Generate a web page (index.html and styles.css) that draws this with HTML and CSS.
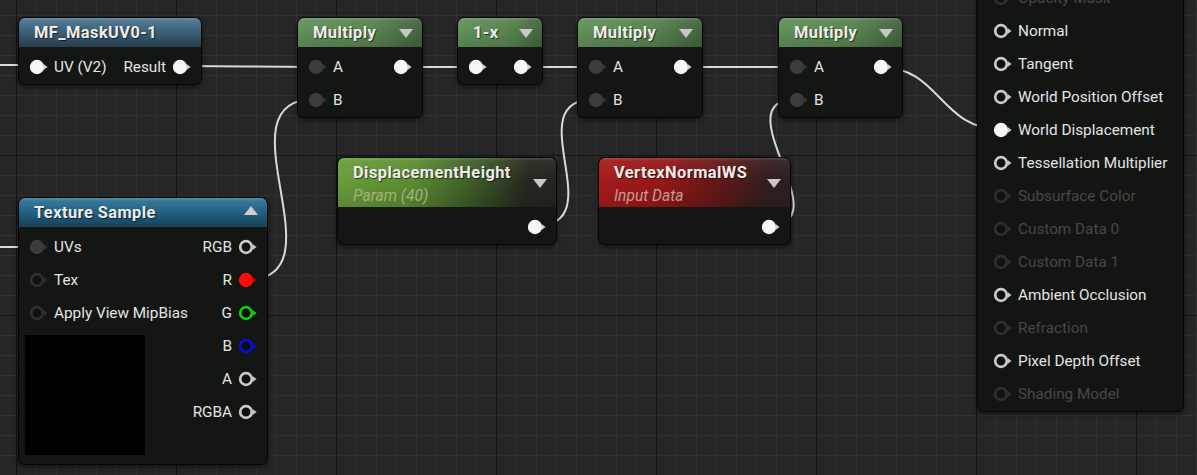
FILE: index.html
```html
<!DOCTYPE html>
<html>
<head>
<meta charset="utf-8">
<link rel="stylesheet" href="styles.css">
</head>
<body>
<div class="graph">
  <svg class="wires" width="1197" height="475" viewBox="0 0 1197 475">
    <path d="M-10 65 L36 65"/>
    <path d="M-10 247 L36 247"/>
    <path d="M181 66 C248 66 248 67 315 67"/>
    <path d="M400 67 L475 67"/>
    <path d="M522 67 L595 67"/>
    <path d="M680 67 L797 67"/>
    <path d="M880 67 C940 67 940 129 1000 129"/>
    <path d="M246 280 C346 280 215 99 315 99"/>
    <path d="M535 226 C615 226 515 99 595 99"/>
    <path d="M767 226 C845 226 719 99 797 99"/>
  </svg>

  <div class="node n-mf">
    <div class="head h-func"><span class="title">MF_MaskUV0-1</span></div>
    <div class="body">
      <div class="row both">
        <div class="pin-in"><svg class="pin p-white" viewBox="0 0 20 16"><circle cx="8" cy="8" r="5.8"/><path d="M14.6 5 L18.6 8 L14.6 11Z"/></svg><span>UV (V2)</span></div>
        <div class="pin-out"><span>Result</span><svg class="pin p-white" viewBox="0 0 20 16"><circle cx="8" cy="8" r="5.8"/><path d="M14.6 5 L18.6 8 L14.6 11Z"/></svg></div>
      </div>
    </div>
  </div>

  <div class="node n-mul1">
    <div class="head h-math"><span class="title">Multiply</span><span class="tri-down"></span></div>
    <div class="body">
      <div class="row both">
        <div class="pin-in"><svg class="pin p-dark" viewBox="0 0 20 16"><circle cx="8" cy="8" r="5.8"/><path d="M14.6 5 L18.6 8 L14.6 11Z"/></svg><span>A</span></div>
        <div class="pin-out"><svg class="pin p-white" viewBox="0 0 20 16"><circle cx="8" cy="8" r="5.8"/><path d="M14.6 5 L18.6 8 L14.6 11Z"/></svg></div>
      </div>
      <div class="row both">
        <div class="pin-in"><svg class="pin p-dark" viewBox="0 0 20 16"><circle cx="8" cy="8" r="5.8"/><path d="M14.6 5 L18.6 8 L14.6 11Z"/></svg><span>B</span></div>
      </div>
    </div>
  </div>

  <div class="node n-onex">
    <div class="head h-math"><span class="title">1-x</span><span class="tri-down"></span></div>
    <div class="body">
      <div class="row both">
        <div class="pin-in"><svg class="pin p-white" viewBox="0 0 20 16"><circle cx="8" cy="8" r="5.8"/><path d="M14.6 5 L18.6 8 L14.6 11Z"/></svg></div>
        <div class="pin-out"><svg class="pin p-white" viewBox="0 0 20 16"><circle cx="8" cy="8" r="5.8"/><path d="M14.6 5 L18.6 8 L14.6 11Z"/></svg></div>
      </div>
    </div>
  </div>

  <div class="node n-mul2">
    <div class="head h-math"><span class="title">Multiply</span><span class="tri-down"></span></div>
    <div class="body">
      <div class="row both">
        <div class="pin-in"><svg class="pin p-dark" viewBox="0 0 20 16"><circle cx="8" cy="8" r="5.8"/><path d="M14.6 5 L18.6 8 L14.6 11Z"/></svg><span>A</span></div>
        <div class="pin-out"><svg class="pin p-white" viewBox="0 0 20 16"><circle cx="8" cy="8" r="5.8"/><path d="M14.6 5 L18.6 8 L14.6 11Z"/></svg></div>
      </div>
      <div class="row both">
        <div class="pin-in"><svg class="pin p-dark" viewBox="0 0 20 16"><circle cx="8" cy="8" r="5.8"/><path d="M14.6 5 L18.6 8 L14.6 11Z"/></svg><span>B</span></div>
      </div>
    </div>
  </div>

  <div class="node n-mul3">
    <div class="head h-math"><span class="title">Multiply</span><span class="tri-down"></span></div>
    <div class="body">
      <div class="row both">
        <div class="pin-in"><svg class="pin p-dark" viewBox="0 0 20 16"><circle cx="8" cy="8" r="5.8"/><path d="M14.6 5 L18.6 8 L14.6 11Z"/></svg><span>A</span></div>
        <div class="pin-out"><svg class="pin p-white" viewBox="0 0 20 16"><circle cx="8" cy="8" r="5.8"/><path d="M14.6 5 L18.6 8 L14.6 11Z"/></svg></div>
      </div>
      <div class="row both">
        <div class="pin-in"><svg class="pin p-dark" viewBox="0 0 20 16"><circle cx="8" cy="8" r="5.8"/><path d="M14.6 5 L18.6 8 L14.6 11Z"/></svg><span>B</span></div>
      </div>
    </div>
  </div>

  <div class="node n-dh">
    <div class="head tall h-param">
      <div class="titles"><span class="title">DisplacementHeight</span><span class="sub sub-green">Param (40)</span></div>
      <span class="tri-down"></span>
    </div>
    <div class="body">
      <div class="row both end">
        <div class="pin-out"><svg class="pin p-white" viewBox="0 0 20 16"><circle cx="8" cy="8" r="5.8"/><path d="M14.6 5 L18.6 8 L14.6 11Z"/></svg></div>
      </div>
    </div>
  </div>

  <div class="node n-vn">
    <div class="head tall h-input">
      <div class="titles"><span class="title">VertexNormalWS</span><span class="sub sub-red">Input Data</span></div>
      <span class="tri-down"></span>
    </div>
    <div class="body">
      <div class="row both end">
        <div class="pin-out"><svg class="pin p-white" viewBox="0 0 20 16"><circle cx="8" cy="8" r="5.8"/><path d="M14.6 5 L18.6 8 L14.6 11Z"/></svg></div>
      </div>
    </div>
  </div>

  <div class="node n-tex">
    <div class="head h-tex"><span class="title">Texture Sample</span><span class="tri-up"></span></div>
    <div class="body tex-body">
      <div class="col">
        <div class="row"><div class="pin-in"><svg class="pin p-dark" viewBox="0 0 20 16"><circle cx="8" cy="8" r="5.8"/><path d="M14.6 5 L18.6 8 L14.6 11Z"/></svg><span>UVs</span></div></div>
        <div class="row"><div class="pin-in"><svg class="pin p-dim" viewBox="0 0 20 16"><circle cx="8" cy="8" r="5.8"/><path d="M14.6 5 L18.6 8 L14.6 11Z"/></svg><span>Tex</span></div></div>
        <div class="row"><div class="pin-in"><svg class="pin p-dim" viewBox="0 0 20 16"><circle cx="8" cy="8" r="5.8"/><path d="M14.6 5 L18.6 8 L14.6 11Z"/></svg><span>Apply View MipBias</span></div></div>
        <div class="preview"></div>
      </div>
      <div class="col">
        <div class="row end"><div class="pin-out"><span>RGB</span><svg class="pin p-ring" viewBox="0 0 20 16"><circle cx="8" cy="8" r="5.8"/><path d="M14.6 5 L18.6 8 L14.6 11Z"/></svg></div></div>
        <div class="row end"><div class="pin-out"><span>R</span><svg class="pin p-red" viewBox="0 0 20 16"><circle cx="8" cy="8" r="5.8"/><path d="M14.6 5 L18.6 8 L14.6 11Z"/></svg></div></div>
        <div class="row end"><div class="pin-out"><span>G</span><svg class="pin p-green" viewBox="0 0 20 16"><circle cx="8" cy="8" r="5.8"/><path d="M14.6 5 L18.6 8 L14.6 11Z"/></svg></div></div>
        <div class="row end"><div class="pin-out"><span>B</span><svg class="pin p-blue" viewBox="0 0 20 16"><circle cx="8" cy="8" r="5.8"/><path d="M14.6 5 L18.6 8 L14.6 11Z"/></svg></div></div>
        <div class="row end"><div class="pin-out"><span>A</span><svg class="pin p-ring" viewBox="0 0 20 16"><circle cx="8" cy="8" r="5.8"/><path d="M14.6 5 L18.6 8 L14.6 11Z"/></svg></div></div>
        <div class="row end"><div class="pin-out"><span>RGBA</span><svg class="pin p-ring" viewBox="0 0 20 16"><circle cx="8" cy="8" r="5.8"/><path d="M14.6 5 L18.6 8 L14.6 11Z"/></svg></div></div>
      </div>
    </div>
  </div>

  <div class="node n-result">
    <div class="body res-body">
      <div class="row dis"><div class="pin-in"><svg class="pin p-dim" viewBox="0 0 20 16"><circle cx="8" cy="8" r="5.8"/><path d="M14.6 5 L18.6 8 L14.6 11Z"/></svg><span>Opacity Mask</span></div></div>
      <div class="row"><div class="pin-in"><svg class="pin p-ring" viewBox="0 0 20 16"><circle cx="8" cy="8" r="5.8"/><path d="M14.6 5 L18.6 8 L14.6 11Z"/></svg><span>Normal</span></div></div>
      <div class="row"><div class="pin-in"><svg class="pin p-ring" viewBox="0 0 20 16"><circle cx="8" cy="8" r="5.8"/><path d="M14.6 5 L18.6 8 L14.6 11Z"/></svg><span>Tangent</span></div></div>
      <div class="row"><div class="pin-in"><svg class="pin p-ring" viewBox="0 0 20 16"><circle cx="8" cy="8" r="5.8"/><path d="M14.6 5 L18.6 8 L14.6 11Z"/></svg><span>World Position Offset</span></div></div>
      <div class="row"><div class="pin-in"><svg class="pin p-white" viewBox="0 0 20 16"><circle cx="8" cy="8" r="5.8"/><path d="M14.6 5 L18.6 8 L14.6 11Z"/></svg><span>World Displacement</span></div></div>
      <div class="row"><div class="pin-in"><svg class="pin p-ring" viewBox="0 0 20 16"><circle cx="8" cy="8" r="5.8"/><path d="M14.6 5 L18.6 8 L14.6 11Z"/></svg><span>Tessellation Multiplier</span></div></div>
      <div class="row dis"><div class="pin-in"><svg class="pin p-dim" viewBox="0 0 20 16"><circle cx="8" cy="8" r="5.8"/><path d="M14.6 5 L18.6 8 L14.6 11Z"/></svg><span>Subsurface Color</span></div></div>
      <div class="row dis"><div class="pin-in"><svg class="pin p-dim" viewBox="0 0 20 16"><circle cx="8" cy="8" r="5.8"/><path d="M14.6 5 L18.6 8 L14.6 11Z"/></svg><span>Custom Data 0</span></div></div>
      <div class="row dis"><div class="pin-in"><svg class="pin p-dim" viewBox="0 0 20 16"><circle cx="8" cy="8" r="5.8"/><path d="M14.6 5 L18.6 8 L14.6 11Z"/></svg><span>Custom Data 1</span></div></div>
      <div class="row"><div class="pin-in"><svg class="pin p-ring" viewBox="0 0 20 16"><circle cx="8" cy="8" r="5.8"/><path d="M14.6 5 L18.6 8 L14.6 11Z"/></svg><span>Ambient Occlusion</span></div></div>
      <div class="row dis"><div class="pin-in"><svg class="pin p-dim" viewBox="0 0 20 16"><circle cx="8" cy="8" r="5.8"/><path d="M14.6 5 L18.6 8 L14.6 11Z"/></svg><span>Refraction</span></div></div>
      <div class="row"><div class="pin-in"><svg class="pin p-ring" viewBox="0 0 20 16"><circle cx="8" cy="8" r="5.8"/><path d="M14.6 5 L18.6 8 L14.6 11Z"/></svg><span>Pixel Depth Offset</span></div></div>
      <div class="row dis"><div class="pin-in"><svg class="pin p-dim" viewBox="0 0 20 16"><circle cx="8" cy="8" r="5.8"/><path d="M14.6 5 L18.6 8 L14.6 11Z"/></svg><span>Shading Model</span></div></div>
    </div>
  </div>
</div>
</body>
</html>
```

FILE: styles.css
```css
* { box-sizing: border-box; }
html, body { margin: 0; padding: 0; background: #262626; }

.graph {
  position: relative;
  width: 1197px;
  height: 475px;
  overflow: hidden;
  font-family: Roboto, "Liberation Sans", sans-serif;
  font-size: 15.3px;
  color: #e4e4e4;
  background:
    linear-gradient(to right, #121212 1px, transparent 1px) 16px 0 / 160px 100%,
    linear-gradient(to bottom, #161616 1px, transparent 1px) 0 155px / 100% 160px,
    linear-gradient(to right, #303030 1px, transparent 1px) 16px 0 / 20px 100%,
    linear-gradient(to bottom, #303030 1px, transparent 1px) 0 15px / 100% 20px,
    #262626;
}

.wires {
  position: absolute;
  left: 0;
  top: 0;
}
.wires path {
  fill: none;
  stroke: #d9d9d9;
  stroke-width: 2;
}

.node {
  position: absolute;
  border: 1px solid #050505;
  border-radius: 7px;
  background: #141614;
  box-shadow: 0 2px 5px rgba(0, 0, 0, 0.55);
  overflow: hidden;
}

.n-mf { left: 18px; top: 17px; width: 184px; }
.n-mul1 { left: 297px; top: 17px; width: 126px; }
.n-onex { left: 457px; top: 17px; width: 86px; }
.n-mul2 { left: 577px; top: 17px; width: 126px; }
.n-mul3 { left: 778px; top: 17px; width: 125px; }
.n-dh { left: 337px; top: 157px; width: 220px; }
.n-vn { left: 598px; top: 157px; width: 193px; }
.n-tex { left: 18px; top: 197px; width: 250px; }
.n-result { left: 977px; top: -23px; width: 207px; background: #131513; border-radius: 0 0 7px 7px; }

.head {
  position: relative;
  height: 29px;
  display: flex;
  align-items: center;
  justify-content: space-between;
  padding: 0 9px 0 15px;
}
.head::after {
  content: "";
  position: absolute;
  inset: 0;
  background: linear-gradient(to bottom, rgba(255,255,255,0.18) 0, rgba(255,255,255,0.05) 3px, rgba(255,255,255,0) 45%, rgba(0,0,0,0.12) 100%);
  pointer-events: none;
}
.head.tall {
  height: 49px;
}

.title {
  position: relative;
  z-index: 1;
  font-weight: bold;
  font-size: 16.4px;
  letter-spacing: 0.45px;
  color: #ececec;
  text-shadow: 1px 1px 1px rgba(0, 0, 0, 0.6);
  white-space: nowrap;
}
.titles {
  position: relative;
  z-index: 1;
  display: flex;
  flex-direction: column;
  gap: 5px;
  margin-top: 3px;
}
.sub {
  font-style: italic;
  font-size: 15.6px;
}
.sub-green { color: #a3b27e; }
.sub-red { color: #c79a96; }

.h-func { background: linear-gradient(to bottom, #4d7391 0%, #3e617a 45%, #2c4658 100%); }
.h-tex { background: linear-gradient(to bottom, #2f7599 0%, #236384 45%, #1a4b66 100%); }
.h-math { background: linear-gradient(to right, #62905a 0%, #57834f 60%, #43633f 100%); }
.h-param { background: linear-gradient(100deg, #6a9e3b 0%, #5b8c32 35%, #3d5a28 62%, #26291f 85%, #222420 100%); }
.h-input { background: linear-gradient(100deg, #a81c1c 0%, #941717 35%, #631818 62%, #351d1d 85%, #2a2222 100%); }

.tri-down {
  position: relative;
  z-index: 1;
  width: 0;
  height: 0;
  border-left: 7px solid transparent;
  border-right: 7px solid transparent;
  border-top: 9px solid #c8c8c8;
  margin-top: 1px;
}
.tri-up {
  position: relative;
  z-index: 1;
  width: 0;
  height: 0;
  border-left: 7px solid transparent;
  border-right: 7px solid transparent;
  border-bottom: 9px solid #cfcfcf;
  margin-top: -4px;
}

.body {
  padding: 3px 0 1px;
}

.row {
  height: 33px;
  display: flex;
  align-items: center;
  padding: 0 9px 0 10px;
  white-space: nowrap;
}
.row.both { justify-content: space-between; }
.row.end { justify-content: flex-end; }

.pin-in, .pin-out {
  display: flex;
  align-items: center;
}
.pin-in span { margin-left: 5px; }
.pin-out span { margin-right: 6px; }

.pin {
  width: 20px;
  height: 16px;
  display: block;
  flex: none;
}
.pin circle { stroke-width: 2.7; }
.p-white circle { fill: #f6f6f6; stroke: #f6f6f6; }
.p-white path { fill: #cfcfcf; }
.p-dark circle { fill: #3c3c3c; stroke: #3c3c3c; }
.p-dark path { fill: #343434; }
.p-ring circle { fill: #101010; stroke: #cbcbcb; }
.p-ring path { fill: #c4c4c4; }
.p-dim circle { fill: #111111; stroke: #2f2f2f; }
.p-dim path { fill: #2f2f2f; }
.p-red circle { fill: #ff0a0a; stroke: #ff0a0a; }
.p-red path { fill: #d40000; }
.p-green circle { fill: #0d0d0d; stroke: #10cc10; }
.p-green path { fill: #10cc10; }
.p-blue circle { fill: #0d0d0d; stroke: #0b0be2; }
.p-blue path { fill: #0b0be2; }

.tex-body {
  display: grid;
  grid-template-columns: minmax(0, 1fr) auto;
  align-items: start;
}
.preview {
  width: 120px;
  height: 120px;
  background: #000;
  margin: 6px 0 8px 6px;
}

.res-body {
  padding: 3px 0 1px;
}
.res-body .row { padding-left: 15px; }
.res-body .pin-in span { margin-left: 5px; }
.row.dis { color: #474747; }
```
